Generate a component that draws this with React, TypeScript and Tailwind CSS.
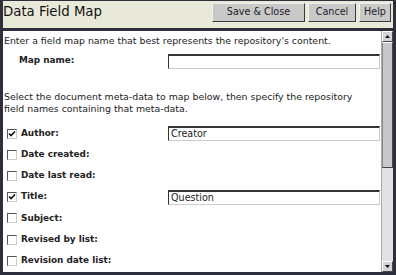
import React from "react";

const font = { fontFamily: '"DejaVu Sans", Verdana, sans-serif' };

function Btn({ children, w }: { children: React.ReactNode; w: string }) {
  return (
    <div
      className={`${w} shrink-0 h-[19px] flex items-center justify-center bg-[#c9c9c9] border border-t-[#efefef] border-l-[#efefef] border-r-[#3a3a3a] border-b-[#3a3a3a] text-[9.6px] text-[#222]`}
    >
      {children}
    </div>
  );
}

function Check({ checked }: { checked: boolean }) {
  return (
    <div className="w-[10px] h-[10px] shrink-0 border border-t-[#555] border-l-[#555] border-r-[#ccc] border-b-[#ccc] bg-white flex items-center justify-center">
      {checked && (
        <svg width="8" height="8" viewBox="0 0 8 8">
          <path d="M1 3.5 L3 5.5 L7 1.5" stroke="#111" strokeWidth="1.6" fill="none" />
        </svg>
      )}
    </div>
  );
}

function TextInput({ value }: { value?: string }) {
  return (
    <div className="w-[212px] h-[15px] shrink-0 bg-white border border-t-[#333] border-l-[#333] border-r-[#ccc] border-b-[#ccc] border-t-2 text-[9.6px] leading-[12px] pl-[2px] text-[#222]">
      {value}
    </div>
  );
}

function Row({ label, checked, value }: { label: string; checked: boolean; value?: string }) {
  return (
    <div className="h-[21.2px] flex items-center pl-[4px] pr-[1px]">
      <Check checked={checked} />
      <div className="ml-[4px] w-[152px] font-bold text-[8.9px] text-[#222]">{label}</div>
      {value !== undefined && <TextInput value={value} />}
    </div>
  );
}

export default function App() {
  return (
    <div className="w-[396px] h-[275px] bg-[#2e2e3c] flex flex-col px-[3px] pb-[3px] pt-[1px] overflow-hidden" style={font}>
      <div className="h-[27px] bg-[#e9e9d9] flex items-start justify-between shrink-0">
        <div className="text-[13.3px] text-[#111] pl-[0px] pt-[3px] leading-[16px]">Data Field Map</div>
        <div className="flex gap-[3px] pt-[2px] pr-[2px]">
          <Btn w="w-[93px]">Save &amp; Close</Btn>
          <Btn w="w-[48px]">Cancel</Btn>
          <Btn w="w-[32px]">Help</Btn>
        </div>
      </div>
      <div className="h-[3px] shrink-0" />
      <div className="flex flex-1 min-h-0">
        <div className="flex-1 bg-white overflow-hidden text-[#222]">
          <div className="text-[9.4px] leading-[13px] pl-[1px] pt-[3px]">
            Enter a field map name that best represents the repository's content.
          </div>
          <div className="flex items-center h-[16px] mt-[6px] pr-[1px]">
            <div className="pl-[16px] w-[166px] font-bold text-[8.9px]">Map name:</div>
            <TextInput />
          </div>
          <div className="text-[9.4px] leading-[12px] pl-[1px] mt-[22px] w-[360px]">
            Select the document meta-data to map below, then specify the repository field names containing that meta-data.
          </div>
          <div className="mt-[8px]">
            <Row label="Author:" checked value="Creator" />
            <Row label="Date created:" checked={false} />
            <Row label="Date last read:" checked={false} />
            <Row label="Title:" checked value="Question" />
            <Row label="Subject:" checked={false} />
            <Row label="Revised by list:" checked={false} />
            <Row label="Revision date list:" checked={false} />
          </div>
        </div>
        <div className="w-[12px] bg-[#e2e2e2] flex flex-col border-l border-[#aaa]">
          <div className="h-[11px] bg-[#d4d4d4] border border-t-white border-l-white border-r-[#444] border-b-[#444] flex items-center justify-center">
            <svg width="5" height="3" viewBox="0 0 5 3"><path d="M2.5 0 L5 3 L0 3 Z" fill="#111" /></svg>
          </div>
          <div className="h-[126px] bg-[#c8c8c8] border border-t-white border-l-[#888] border-r-[#444] border-b-[#444]" />
          <div className="flex-1" />
          <div className="h-[11px] bg-[#d4d4d4] border border-t-white border-l-white border-r-[#444] border-b-[#444] flex items-center justify-center">
            <svg width="5" height="3" viewBox="0 0 5 3"><path d="M0 0 L5 0 L2.5 3 Z" fill="#111" /></svg>
          </div>
        </div>
      </div>
    </div>
  );
}
